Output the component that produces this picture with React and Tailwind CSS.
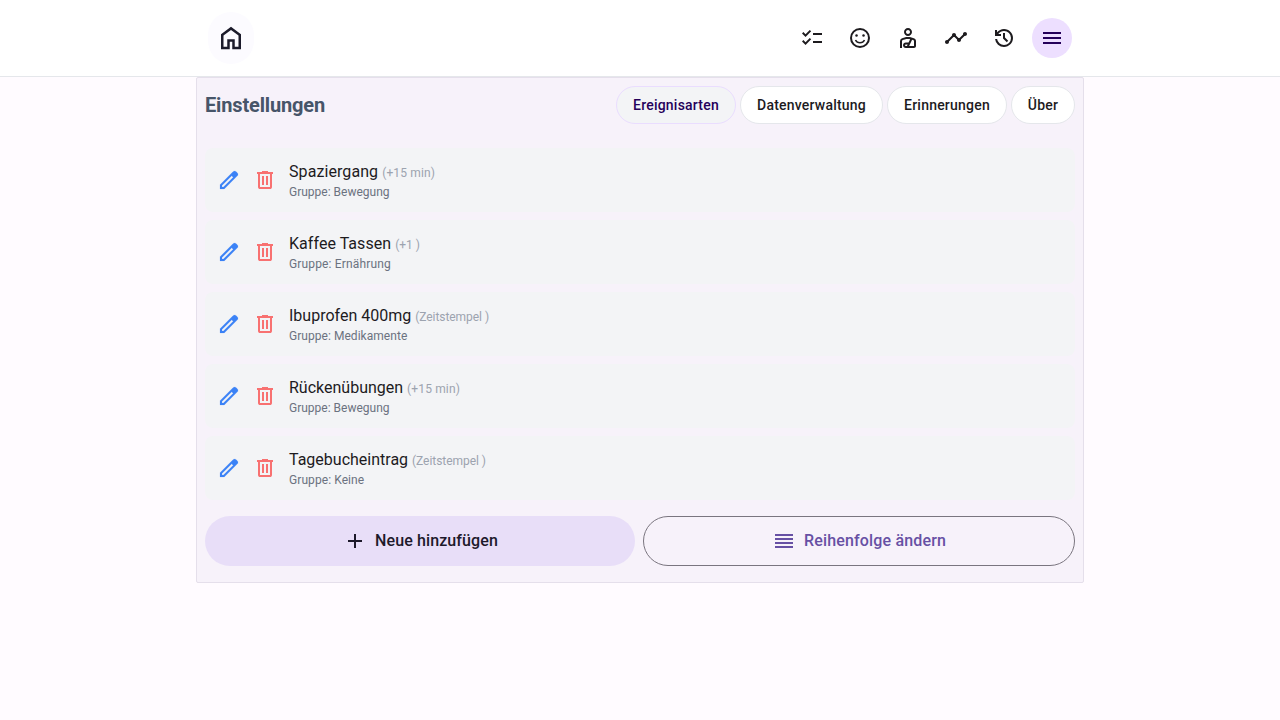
import { MdOutlinePersonalInjury, MdTimeline, MdMenu } from 'react-icons/md';

const PATHS = {
  home: 'M240-200h120v-240h240v240h120v-360L480-740 240-560v360Zm-80 80v-480l320-240 320 240v480H520v-240h-80v240H160Z',
  checklist: 'M222-200 80-342l56-56 85 85 170-170 56 57-225 226Zm0-320L80-662l56-56 85 85 170-170 56 57-225 226Zm298 240v-80h360v80H520Zm0-320v-80h360v80H520Z',
  history: 'M480-120q-138 0-240.5-91.5T122-440h82q14 104 92.5 172T480-200q117 0 198.5-81.5T760-480q0-117-81.5-198.5T480-760q-69 0-129 32t-101 88h110v80H120v-240h80v94q51-64 124.5-99T480-840q75 0 140.5 28.5t114 77q48.5 48.5 77 114T840-480q0 75-28.5 140.5t-77 114q-48.5 48.5-114 77T480-120Zm112-192L440-464v-216h80v184l128 128-56 56Z',
  edit: 'M200-200h57l391-391-57-57-391 391v57Zm-80 80v-170l528-527q12-11 26.5-17t30.5-6q16 0 31 6t26 18l55 56q12 11 17.5 26t5.5 30q0 16-5.5 30.5T817-647L290-120H120Zm640-584-56-56 56 56Zm-141 85-28-29 57 57-29-28Z',
  trash: 'M280-120q-33 0-56.5-23.5T200-200v-520h-40v-80h200v-40h240v40h200v80h-40v520q0 33-23.5 56.5T680-120H280Zm400-600H280v520h400v-520ZM360-280h80v-360h-80v360Zm160 0h80v-360h-80v360ZM280-720v520-520Z',
  add: 'M440-440H200v-80h240v-240h80v240h240v80H520v240h-80v-240Z',
  reorder: 'M120-200v-80h720v80H120Zm0-160v-80h720v80H120Zm0-160v-80h720v80H120Zm0-160v-80h720v80H120Z',
};

function Icon({ name, className = 'size-6' }) {
  return (
    <svg viewBox="0 -960 960 960" fill="currentColor" className={`shrink-0 ${className}`}>
      <path d={PATHS[name]} />
    </svg>
  );
}

function SmileIcon() {
  return (
    <svg viewBox="0 0 24 24" className="size-6">
      <circle cx="12" cy="12" r="9" fill="none" stroke="currentColor" strokeWidth="2" />
      <circle cx="8.5" cy="9.5" r="1.25" fill="currentColor" />
      <circle cx="15.5" cy="9.5" r="1.25" fill="currentColor" />
      <path d="M7.5 14a5 5 0 0 0 9 0" fill="none" stroke="currentColor" strokeWidth="1.5" />
    </svg>
  );
}

const EVENTS = [
  { title: 'Spaziergang', detail: '(+15 min)', group: 'Bewegung', tracking: 'tracking-[0.08px]', detailTracking: 'tracking-[0.15px]' },
  { title: 'Kaffee Tassen', detail: '(+1 )', group: 'Ernährung', tracking: 'tracking-[0.05px]', groupTracking: 'tracking-[0.15px]' },
  { title: 'Ibuprofen 400mg', detail: '(Zeitstempel )', group: 'Medikamente', detailTracking: 'tracking-[-0.05px]', groupTracking: 'tracking-[0.04px]' },
  { title: 'Rückenübungen', detail: '(+15 min)', group: 'Bewegung', detailTracking: 'tracking-[0.15px]' },
  { title: 'Tagebucheintrag', detail: '(Zeitstempel )', group: 'Keine', detailTracking: 'tracking-[-0.05px]', groupTracking: 'tracking-[0.08px]' },
];

const TABS = [
  { label: 'Ereignisarten', width: 'w-[120px]' },
  { label: 'Datenverwaltung', width: 'w-[143px]' },
  { label: 'Erinnerungen', width: 'w-[120px]' },
  { label: 'Über', width: 'w-16' },
];

function NavButton({ children, active }) {
  return (
    <button
      className={`flex size-10 items-center justify-center rounded-full ${
        active ? 'bg-[#eddfff] text-[#25005a]' : 'text-[#1d1b1e]'
      }`}
    >
      {children}
    </button>
  );
}

function Header() {
  return (
    <header className="h-[77px] border-b border-[#e5e7eb] bg-white">
      <div className="mx-auto flex h-full w-[888px] items-center justify-between px-3">
        <button className="flex h-[52px] w-[46px] items-center justify-center rounded-full bg-[#fcfbff] text-[#1c1b2b]">
          <Icon name="home" className="size-[30px]" />
        </button>
        <nav className="flex gap-2">
          <NavButton><Icon name="checklist" /></NavButton>
          <NavButton><SmileIcon /></NavButton>
          <NavButton><MdOutlinePersonalInjury className="size-6" /></NavButton>
          <NavButton><MdTimeline className="size-6" /></NavButton>
          <NavButton><Icon name="history" /></NavButton>
          <NavButton active><MdMenu className="size-6" /></NavButton>
        </nav>
      </div>
    </header>
  );
}

function EventRow({ title, detail, group, tracking = '', detailTracking = '', groupTracking = '' }) {
  return (
    <li className="flex h-16 items-center rounded-lg bg-[#f3f4f6] px-3">
      <button className="text-[#3b82f6]">
        <Icon name="edit" className="size-6 stroke-current stroke-[6]" />
      </button>
      <button className="ml-3 text-[#f87171]"><Icon name="trash" /></button>
      <div className="ml-3">
        <div className="text-base leading-6 text-[#1d1b1e]">
          <span className={tracking}>{title}</span>{' '}
          <span className={`text-xs text-[#9ca3af] ${detailTracking}`}>{detail}</span>
        </div>
        <div className={`text-xs leading-4 text-[#6b7280] ${groupTracking}`}>Gruppe: {group}</div>
      </div>
    </li>
  );
}

export default function App() {
  return (
    <div className="min-h-screen bg-[#fffbff] font-[Roboto,sans-serif]">
      <Header />
      <main className="mx-auto h-[506px] w-[888px] rounded-[2px] border border-[#e5dfeb] bg-[#f7f2fa] p-2">
        <div className="flex h-[38px] items-center justify-between">
          <h1 className="text-xl font-bold tracking-[-0.15px] text-[#475569]">Einstellungen</h1>
          <div className="flex gap-1">
            {TABS.map(({ label, width }, i) => (
              <button
                key={label}
                className={`h-[38px] whitespace-nowrap rounded-full border text-center text-sm font-medium tracking-[0.21px] ${width} ${
                  i === 0
                    ? 'border-[#eaddff] bg-[#f3f4f6] text-[#25005a]'
                    : 'border-[#e5e7eb] bg-white text-[#1d1b1e]'
                }`}
              >
                {label}
              </button>
            ))}
          </div>
        </div>
        <ul className="mt-6 flex flex-col gap-2">
          {EVENTS.map((event) => (
            <EventRow key={event.title} {...event} />
          ))}
        </ul>
        <div className="mt-4 grid h-[50px] grid-cols-[430px_432px] gap-2 text-base font-medium">
          <button className="flex items-center justify-center gap-2 rounded-full bg-[#e8def8] pl-px tracking-[0.1px] text-[#1d192b]">
            <Icon name="add" /> Neue hinzufügen
          </button>
          <button className="flex items-center justify-center gap-2 rounded-full border border-[#7a757f] tracking-[0.16px] text-[#6750a4]">
            <Icon name="reorder" /> Reihenfolge ändern
          </button>
        </div>
      </main>
    </div>
  );
}
